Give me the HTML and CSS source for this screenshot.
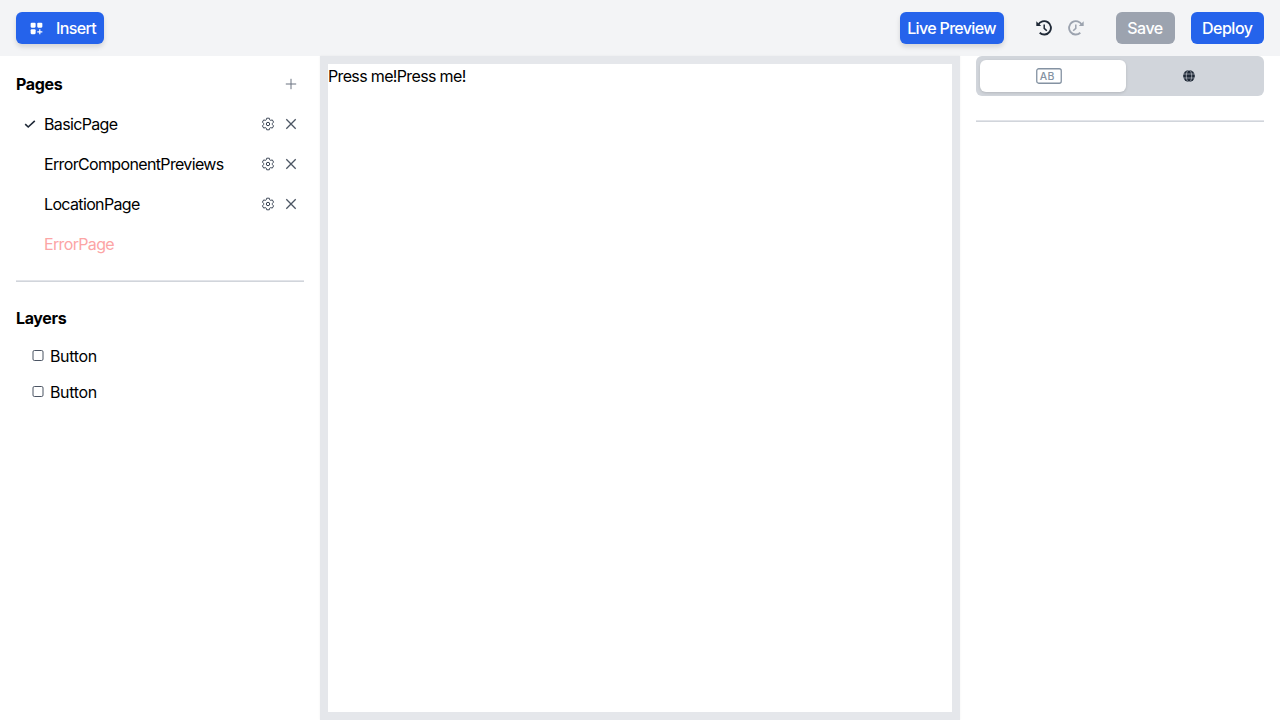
FILE: index.html
```html
<!DOCTYPE html>
<html lang="en">
<head>
<meta charset="utf-8">
<title>Studio</title>
<link rel="stylesheet" href="styles.css">
</head>
<body>
<svg class="symbols" aria-hidden="true">
  <symbol id="gear" viewBox="0 0 14 14">
    <path d="M5.7 1.2h2.6l.4 1.6 1 .6 1.6-.5 1.3 2.2L11.4 6.3v1.4l1.2 1.2-1.3 2.2-1.6-.5-1 .6-.4 1.6H5.7l-.4-1.6-1-.6-1.6.5-1.3-2.2 1.2-1.2V6.3L1.4 5.1l1.3-2.2 1.6.5 1-.6z" fill="none" stroke="currentColor" stroke-width=".95" stroke-linejoin="round"/>
    <circle cx="7" cy="7" r="1.7" fill="none" stroke="currentColor" stroke-width="1"/>
  </symbol>
  <symbol id="cross" viewBox="0 0 12 12"><path d="M1.3 1.3l9.4 9.4M10.7 1.3l-9.4 9.4" stroke="currentColor" stroke-width="1.3"/></symbol>
  <symbol id="box" viewBox="0 0 12 12"><rect x="1" y=".5" width="10" height="10" rx="1.4" fill="none" stroke="currentColor" stroke-width=".9"/></symbol>
  <symbol id="history" viewBox="0 0 16 16">
    <path d="M2.2 4.9A6.7 6.7 0 1 1 3.7 12.8" fill="none" stroke="currentColor" stroke-width="1.9"/>
    <path d="M.3 1.2v4.9h4.9z" fill="currentColor"/>
    <path d="M8.2 4.4v4l2.6 2.4" fill="none" stroke="currentColor" stroke-width="1.5"/>
  </symbol>
</svg>
<header class="topbar">
  <button class="btn insert">
    <svg class="insert-icon" viewBox="0 0 12 12" fill="currentColor"><rect x=".6" y=".6" width="4.6" height="4.6" rx="1"/><rect x="6.7" y=".6" width="4.7" height="4.6" rx="1"/><rect x=".6" y="6.6" width="4.6" height="4.6" rx="1"/><path d="M8.5 6.7h1.1v1.8h1.8v1.1H9.6v1.8H8.5V9.6H6.7V8.5h1.8z"/></svg>
    <span>Insert</span>
  </button>
  <div class="actions">
    <button class="btn preview">Live Preview</button>
    <div class="history">
      <svg class="undo"><use href="#history"/></svg>
      <svg class="redo"><use href="#history"/></svg>
    </div>
    <button class="btn save">Save</button>
    <button class="btn deploy">Deploy</button>
  </div>
</header>
<main class="workspace">
  <aside class="left">
    <div class="heading pages-heading"><h2>Pages</h2><svg class="plus" viewBox="0 0 12 12"><path d="M6 .8v10.4M.8 6h10.4" stroke="currentColor"/></svg></div>
    <ul class="pages">
      <li><svg class="check" viewBox="0 0 12 10"><path d="M1.2 5.1l3 2.9 6.6-6.2" fill="none" stroke="currentColor" stroke-width="1.6"/></svg><span class="name">BasicPage</span><svg class="gear"><use href="#gear"/></svg><svg class="cross"><use href="#cross"/></svg></li>
      <li><span class="name">ErrorComponentPreviews</span><svg class="gear"><use href="#gear"/></svg><svg class="cross"><use href="#cross"/></svg></li>
      <li><span class="name">LocationPage</span><svg class="gear"><use href="#gear"/></svg><svg class="cross"><use href="#cross"/></svg></li>
      <li class="error"><span class="name">ErrorPage</span></li>
    </ul>
    <hr>
    <div class="heading"><h2>Layers</h2></div>
    <ul class="layers">
      <li><svg class="box"><use href="#box"/></svg><span>Button</span></li>
      <li><svg class="box"><use href="#box"/></svg><span>Button</span></li>
    </ul>
  </aside>
  <section class="stage"><div class="canvas">Press me!Press me!</div></section>
  <aside class="right">
    <div class="tabs">
      <div class="tab active"><svg class="ab" viewBox="0 0 26 16"><rect x=".75" y=".75" width="24.5" height="14.5" rx="2" fill="none" stroke="currentColor" stroke-width="1.3"/><text x="3.8" y="12">AB</text></svg></div>
      <div class="tab"><svg class="globe" viewBox="0 0 12 12"><circle cx="6" cy="6" r="5.9" fill="#1f2937"/><g fill="none" stroke="#d1d5db" stroke-width=".6"><ellipse cx="6" cy="6" rx="2.7" ry="6"/><path d="M0 4h12M0 8h12"/></g></svg></div>
    </div>
    <hr>
  </aside>
</main>
</body>
</html>
```
FILE: styles.css
```css
* { box-sizing: border-box; }
body { margin: 0; height: 720px; overflow: hidden; background: #fff; color: #000; font: 400 16px/24px Inter, sans-serif; letter-spacing: -0.65px; display: flex; flex-direction: column; }
svg { display: block; flex: none; }
.symbols { display: none; }
h2, ul { margin: 0; padding: 0; font-size: 16px; list-style: none; }
h2 { font-weight: 700; letter-spacing: -0.35px; }
.topbar { height: 56px; flex: none; display: flex; align-items: center; justify-content: space-between; padding: 0 16px; background: #f3f4f6; }
.btn { height: 32px; border: 0; border-radius: 6px; padding: 0; background: #2563eb; color: #fff; font: inherit; font-weight: 500; letter-spacing: inherit; display: flex; align-items: center; justify-content: center; white-space: nowrap; }
.insert { width: 88px; gap: 13px; padding-left: 6px; box-shadow: 0 3px 5px rgba(0,0,0,.13); }
.insert-icon { width: 13px; height: 13px; }
.actions { display: flex; align-items: center; }
.preview { width: 104px; box-shadow: 0 3px 5px rgba(0,0,0,.13); }
.history { display: flex; gap: 16px; margin: 0 32px; }
.history svg { width: 16px; height: 16px; color: #1f2937; }
.history .redo { color: #9ca3af; transform: scaleX(-1); }
.save { width: 59px; background: #9ca3af; letter-spacing: -0.5px; }
.deploy { width: 73.5px; margin-left: 16px; letter-spacing: -0.5px; }
.workspace { display: flex; flex: 1; min-height: 0; }
.left { width: 320px; padding: 8px 16px; }
.heading { height: 40px; display: flex; align-items: center; justify-content: space-between; }
.pages-heading { padding-right: 7px; }
.plus { width: 12px; height: 12px; color: #6b7280; }
.pages li { height: 40px; display: flex; align-items: center; padding: 0 7px 0 8px; }
.check { width: 12px; height: 10px; color: #1f2937; }
.name { flex: 1; margin-left: 20px; }
.check + .name { margin-left: 8px; }
.gear { width: 14px; height: 14px; margin-right: 10px; color: #374151; }
.cross { width: 12px; height: 12px; color: #4b5563; }
.error { color: #fca5a5; }
hr { height: 2px; margin: 0; border: 0; border-top: 1px solid #e2e4e9; border-bottom: 1px solid #d1d5db; }
.left hr { margin: 16px 0; }
.layers li { height: 36px; display: flex; align-items: center; gap: 6px; padding-left: 16px; letter-spacing: -0.35px; }
.box { width: 12px; height: 12px; color: #374151; }
.stage { width: 640px; padding: 8px; background: #e5e7eb; box-shadow: 0 0 2px rgba(0,0,0,.06); }
.canvas { height: 648px; background: #fff; }
.right { width: 320px; padding: 0 16px; }
.tabs { height: 40px; display: flex; padding: 4px; border-radius: 6px; background: #d1d5db; margin-bottom: 24px; }
.tab { flex: 1; display: flex; align-items: center; justify-content: center; }
.active { flex: none; width: 146px; padding-right: 8px; border-radius: 6px; background: #fff; box-shadow: 0 1px 3px rgba(0,0,0,.14); }
.tab + .tab { padding-right: 8px; }
.ab { width: 26px; height: 16px; color: #8492a2; }
.ab text { font: 500 10.5px Inter, sans-serif; letter-spacing: .2px; fill: currentColor; }
.globe { width: 12px; height: 12px; }
```
